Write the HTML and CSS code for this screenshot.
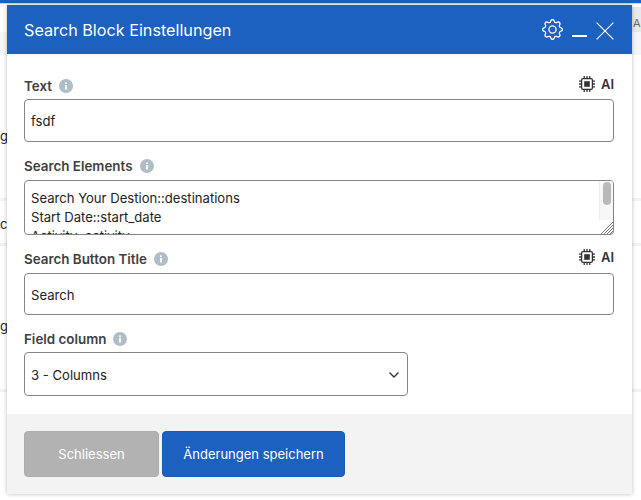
FILE: index.html
```html
<!DOCTYPE html>
<html lang="de">
<head>
<meta charset="utf-8">
<title>Search Block Einstellungen</title>
<link rel="stylesheet" href="styles.css">
</head>
<body>
<div class="page">
  <div class="topbar"></div>
  <div class="table">
    <div class="ttop"><span class="th-right">A</span></div>
    <div class="thead"></div>
    <div class="trow r1"><span class="cell">g</span></div>
    <div class="trow r2"><span class="cell">cc</span></div>
    <div class="trow r3"><span class="cell">g</span></div>
  </div>
</div>
<div class="modal">
  <header class="mhead">
    <h1 class="mtitle">Search Block Einstellungen</h1>
    <div class="mtools">
      <svg class="gear" viewBox="0 0 16 16" width="21" height="21" fill="#fff"><path d="M8 4.754a3.246 3.246 0 1 0 0 6.492 3.246 3.246 0 0 0 0-6.492zM5.754 8a2.246 2.246 0 1 1 4.492 0 2.246 2.246 0 0 1-4.492 0z"/><path d="M9.796 1.343c-.527-1.79-3.065-1.79-3.592 0l-.094.319a.873.873 0 0 1-1.255.52l-.292-.16c-1.64-.892-3.433.902-2.54 2.541l.159.292a.873.873 0 0 1-.52 1.255l-.319.094c-1.79.527-1.79 3.065 0 3.592l.319.094a.873.873 0 0 1 .52 1.255l-.16.292c-.892 1.64.901 3.434 2.541 2.54l.292-.159a.873.873 0 0 1 1.255.52l.094.319c.527 1.79 3.065 1.79 3.592 0l.094-.319a.873.873 0 0 1 1.255-.52l.292.16c1.64.893 3.434-.902 2.54-2.541l-.159-.292a.873.873 0 0 1 .52-1.255l.319-.094c1.79-.527 1.79-3.065 0-3.592l-.319-.094a.873.873 0 0 1-.52-1.255l.16-.292c.893-1.64-.902-3.433-2.541-2.54l-.292.159a.873.873 0 0 1-1.255-.52l-.094-.319zm-2.633.283c.246-.835 1.428-.835 1.674 0l.094.319a1.873 1.873 0 0 0 2.693 1.115l.291-.16c.764-.415 1.6.42 1.184 1.185l-.159.292a1.873 1.873 0 0 0 1.116 2.692l.318.094c.835.246.835 1.428 0 1.674l-.319.094a1.873 1.873 0 0 0-1.115 2.693l.16.291c.415.764-.42 1.6-1.185 1.184l-.291-.159a1.873 1.873 0 0 0-2.693 1.116l-.094.318c-.246.835-1.428.835-1.674 0l-.094-.319a1.873 1.873 0 0 0-2.692-1.115l-.292.16c-.764.415-1.6-.42-1.184-1.185l.159-.291A1.873 1.873 0 0 0 1.945 8.93l-.319-.094c-.835-.246-.835-1.428 0-1.674l.319-.094A1.873 1.873 0 0 0 3.06 4.377l-.16-.292c-.415-.764.42-1.6 1.185-1.184l.292.159a1.873 1.873 0 0 0 2.692-1.115l.094-.319z"/></svg>
      <span class="minus"></span>
      <svg class="close" viewBox="0 0 18 18" width="18" height="18" fill="none" stroke="#fff" stroke-width="1.3"><path d="M.6.6l16.8 16.8M17.4.6L.6 17.4"/></svg>
    </div>
  </header>
  <div class="mbody">
    <div class="field f-text">
      <div class="lrow">
        <label class="label">Text</label>
        <svg class="info" viewBox="0 0 14 14" width="14" height="14"><circle cx="7" cy="7" r="7" fill="#aebdc6"/><rect x="6.1" y="6" width="1.8" height="4.6" fill="#fff"/><rect x="6.1" y="3.4" width="1.8" height="1.7" fill="#fff"/></svg>
        <span class="ai">
          <svg viewBox="0 0 16 16" width="16" height="16" fill="none" stroke="#333" stroke-width="1.3"><rect x="2.6" y="2.6" width="10.8" height="10.8" rx="1.4"/><rect x="5.2" y="5.2" width="5.6" height="5.6" fill="#333" stroke="none"/><path d="M5.2 0v2.4M8 0v2.4M10.8 0v2.4M5.2 13.6V16M8 13.6V16M10.8 13.6V16M0 5.2h2.4M0 8h2.4M0 10.8h2.4M13.6 5.2H16M13.6 8H16M13.6 10.8H16"/></svg>
          AI
        </span>
      </div>
      <div class="input">fsdf</div>
    </div>
    <div class="field f-area">
      <div class="lrow lrow-tight">
        <label class="label">Search Elements</label>
        <svg class="info" viewBox="0 0 14 14" width="14" height="14"><circle cx="7" cy="7" r="7" fill="#aebdc6"/><rect x="6.1" y="6" width="1.8" height="4.6" fill="#fff"/><rect x="6.1" y="3.4" width="1.8" height="1.7" fill="#fff"/></svg>
      </div>
      <div class="area">
        <div class="area-text">Search Your Destion::destinations<br>Start Date::start_date<br>Activity::activity</div>
        <div class="scroll"><span class="thumb"></span></div>
        <svg class="grip" viewBox="0 0 13 13" width="13" height="13" fill="none" stroke="#777" stroke-width="1"><path d="M1 13L13 1M4 13l9-9M7 13l6-6M10 13l3-3"/></svg>
      </div>
    </div>
    <div class="field f-btn">
      <div class="lrow lrow-tight">
        <label class="label">Search Button Title</label>
        <svg class="info" viewBox="0 0 14 14" width="14" height="14"><circle cx="7" cy="7" r="7" fill="#aebdc6"/><rect x="6.1" y="6" width="1.8" height="4.6" fill="#fff"/><rect x="6.1" y="3.4" width="1.8" height="1.7" fill="#fff"/></svg>
        <span class="ai">
          <svg viewBox="0 0 16 16" width="16" height="16" fill="none" stroke="#333" stroke-width="1.3"><rect x="2.6" y="2.6" width="10.8" height="10.8" rx="1.4"/><rect x="5.2" y="5.2" width="5.6" height="5.6" fill="#333" stroke="none"/><path d="M5.2 0v2.4M8 0v2.4M10.8 0v2.4M5.2 13.6V16M8 13.6V16M10.8 13.6V16M0 5.2h2.4M0 8h2.4M0 10.8h2.4M13.6 5.2H16M13.6 8H16M13.6 10.8H16"/></svg>
          AI
        </span>
      </div>
      <div class="input input-short">Search</div>
    </div>
    <div class="field f-sel">
      <div class="lrow">
        <label class="label">Field column</label>
        <svg class="info" viewBox="0 0 14 14" width="14" height="14"><circle cx="7" cy="7" r="7" fill="#aebdc6"/><rect x="6.1" y="6" width="1.8" height="4.6" fill="#fff"/><rect x="6.1" y="3.4" width="1.8" height="1.7" fill="#fff"/></svg>
      </div>
      <div class="input select">
        <span>3 - Columns</span>
        <svg viewBox="0 0 10 6" width="10" height="6" fill="none" stroke="#333" stroke-width="1.4"><path d="M.5.5L5 5 9.500.5"/></svg>
      </div>
    </div>
  </div>
  <footer class="mfoot">
    <button class="btn btn-grey">Schliessen</button>
    <button class="btn btn-blue">Änderungen speichern</button>
  </footer>
</div>
</body>
</html>
```
FILE: styles.css
```css
html, body {
  margin: 0;
  padding: 0;
  height: 500px;
  overflow: hidden;
  background: #fff;
  font-family: "Inter", "Liberation Sans", sans-serif;
  color: #222;
}
.page {
  height: 500px;
  overflow: hidden;
}
.topbar {
  height: 3px;
  background: #1c60c0;
  border-bottom: 1px solid #c9d6e8;
}
.ttop {
  height: 28px;
  display: flex;
  justify-content: flex-end;
  align-items: flex-end;
}
.th-right {
  width: 8px;
  height: 25px;
  background: #e9e9e9;
  padding-left: 2px;
  font-size: 11px;
  line-height: 33px;
  color: #666;
  overflow: hidden;
}
.thead {
  height: 23px;
  background: #f6f6f6;
}
.trow {
  border-bottom: 3px solid #f3f3f3;
  font-size: 13px;
  color: #222;
}
.cell {
  display: block;
  line-height: 16px;
}
.r1 { height: 143px; }
.r1 .cell { padding-top: 73px; }
.r2 { height: 42px; }
.r2 .cell { padding-top: 15px; }
.r3 { height: 143px; }
.r3 .cell { padding-top: 72px; }
.modal {
  position: absolute;
  left: 7px;
  top: 5px;
  width: 625px;
  height: 489px;
  display: flex;
  flex-direction: column;
  background: #fff;
  box-shadow: 0 0 4px rgba(0,0,0,.28);
}
.mhead {
  flex: none;
  height: 49px;
  background: #1c60c0;
  display: flex;
  align-items: center;
  justify-content: space-between;
  padding: 0 18px 0 17px;
}
.mtitle {
  margin: 0;
  font-size: 16.2px;
  font-weight: 400;
  color: #fff;
}
.mtools {
  display: flex;
  align-items: center;
}
.gear { margin-right: 9px; }
.minus {
  width: 15px;
  height: 1.5px;
  background: #fff;
  margin: 13px 9px 0 0;
}
.close { margin-top: 2px; }
.mbody {
  flex: 1;
  padding: 0 18px 0 17px;
}
.field { display: flex; flex-direction: column; }
.f-text { padding-top: 21.5px; }
.f-area { padding-top: 13.5px; }
.f-btn { padding-top: 13.5px; }
.f-sel { padding-top: 13.5px; }
.lrow {
  display: flex;
  align-items: center;
  gap: 7px;
  height: 20px;
  margin-bottom: 3.5px;
}
.lrow-tight { margin-bottom: 4.5px; }
.label {
  font-size: 13.4px;
  font-weight: 600;
  color: #3f3f3f;
}
.ai {
  margin-left: auto;
  margin-bottom: 3px;
  display: flex;
  align-items: center;
  gap: 6px;
  font-size: 13px;
  font-weight: 600;
  color: #333;
}
.input {
  box-sizing: border-box;
  height: 43px;
  border: 1px solid #858585;
  border-radius: 4px;
  padding: 0 6px;
  display: flex;
  align-items: center;
  font-size: 13.1px;
  color: #222;
}
.input-short { height: 42px; padding-top: 1px; }
.area {
  box-sizing: border-box;
  position: relative;
  height: 55px;
  border: 1px solid #858585;
  border-radius: 4px;
  overflow: hidden;
}
.area-text {
  padding: 8px 6px 0;
  font-size: 13.1px;
  line-height: 19px;
  color: #222;
}
.scroll {
  position: absolute;
  top: 0;
  right: 0;
  width: 14px;
  height: 39px;
  background: #f7f7f7;
  border-left: 1px solid #ececec;
  box-sizing: border-box;
}
.thumb {
  display: block;
  width: 7.5px;
  height: 23px;
  margin: 1px 0 0 3px;
  background: #b9b9b9;
  border-radius: 4px;
}
.grip {
  position: absolute;
  right: 0;
  bottom: 0;
}
.select {
  width: 384px;
  height: 44px;
  justify-content: space-between;
  padding-top: 1px;
  padding-right: 8px;
}
.mfoot {
  flex: none;
  height: 80px;
  background: #f3f3f3;
  display: flex;
  align-items: flex-start;
  gap: 3px;
  padding: 17px 17px 0;
  box-sizing: border-box;
}
.btn {
  height: 46px;
  border-radius: 4px;
  font-family: inherit;
  font-size: 13px;
  color: #fff;
}
.btn-grey {
  width: 135px;
  background: #b2b2b2;
  border: 1px solid #adadad;
}
.btn-blue {
  width: 183px;
  background: #1c60c0;
  border: 1px solid #1a5ab6;
}
```
